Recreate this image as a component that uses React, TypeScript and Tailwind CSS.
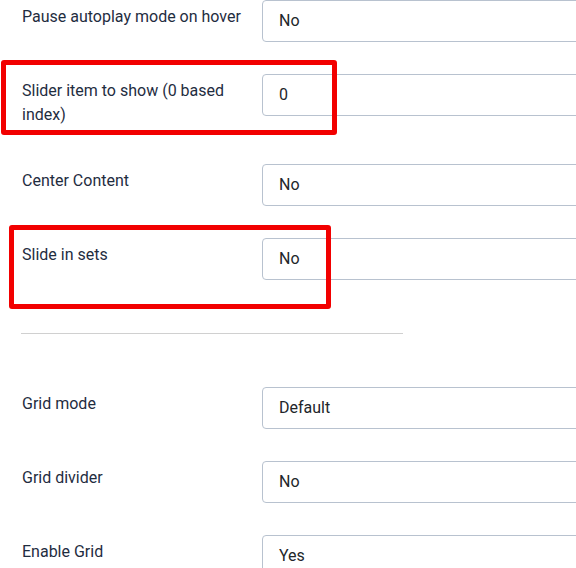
import React from 'react';

type Field = { label: string; value: string };

const sliderFields: Field[] = [
  { label: 'Pause autoplay mode on hover', value: 'No' },
  { label: 'Slider item to show (0 based index)', value: '0' },
  { label: 'Center Content', value: 'No' },
  { label: 'Slide in sets', value: 'No' },
];

const gridFields: Field[] = [
  { label: 'Grid mode', value: 'Default' },
  { label: 'Grid divider', value: 'No' },
  { label: 'Enable Grid', value: 'Yes' },
];

function FieldRow({ label, value }: Field) {
  return (
    <div className="flex items-start mb-8">
      <label className="w-[240px] shrink-0 pr-4 py-[5px] text-[16px] leading-6 text-[#1f2d3f]">
        {label}
      </label>
      <div className="w-[360px] shrink-0 h-[42px] flex items-center pl-4 border border-[#b8c2cf] rounded-[4px] bg-white text-[16px] text-[#22262a]">
        {value}
      </div>
    </div>
  );
}

export default function App() {
  return (
    <div
      className="relative w-[576px] h-[568px] overflow-hidden bg-white"
      style={{ fontFamily: 'Roboto, "Liberation Sans", sans-serif' }}
    >
      <div className="pl-[22px]">
        {sliderFields.map((f) => (
          <FieldRow key={f.label} {...f} />
        ))}
        <hr className="w-[382px] -ml-px mt-[53px] mb-[53px] border-0 border-t border-[#d0d0d0]" />
        {gridFields.map((f) => (
          <FieldRow key={f.label} {...f} />
        ))}
      </div>

      {/* annotation boxes */}
      <div className="absolute left-[1px] top-[60px] w-[336px] h-[75px] border-[5px] border-[#f20000] rounded-[3px] pointer-events-none" />
      <div className="absolute left-[9px] top-[225px] w-[322px] h-[84px] border-[5px] border-[#f20000] rounded-[3px] pointer-events-none" />
    </div>
  );
}
